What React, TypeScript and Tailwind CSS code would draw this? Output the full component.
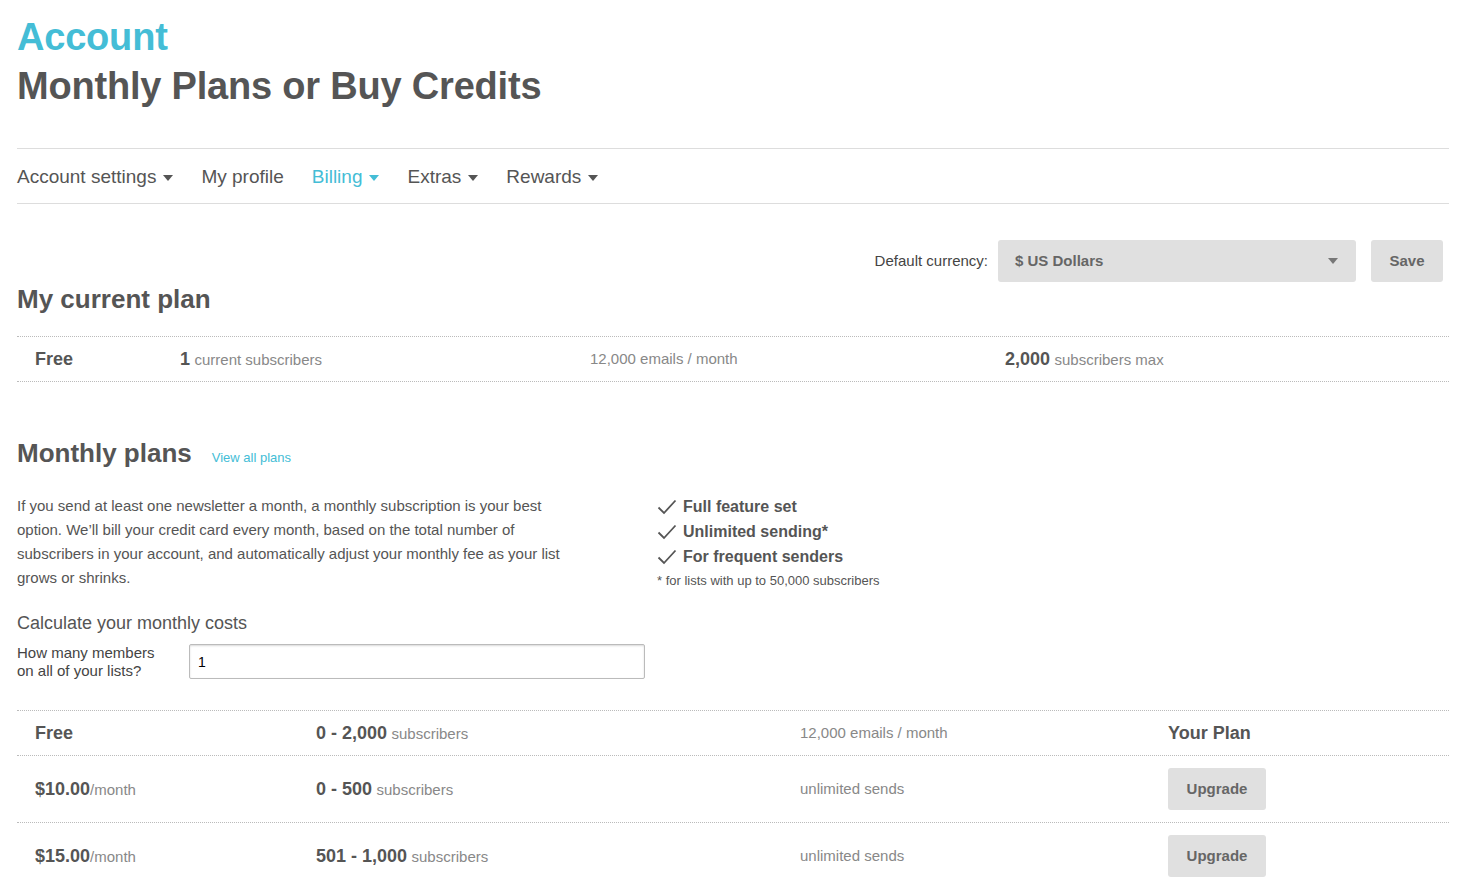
import React from 'react';

const Caret: React.FC<{ className?: string }> = ({ className }) => (
    <svg width="10" height="6" viewBox="0 0 10 6" className={className}>
        <path d="M0 0 L10 0 L5 6 Z" fill="currentColor" />
    </svg>
);

const Check: React.FC = () => (
    <svg width="20" height="16" viewBox="0 0 20 16" className="shrink-0">
        <path d="M1.5 8.5 L7 14 L18.5 1.5" fill="none" stroke="#555" strokeWidth="1.8" />
    </svg>
);

const NAV = [
    { label: 'Account settings', caret: true },
    { label: 'My profile', caret: false },
    { label: 'Billing', caret: true, active: true },
    { label: 'Extras', caret: true },
    { label: 'Rewards', caret: true },
];

const PLANS = [
    { price: '$10.00', range: '0 - 500' },
    { price: '$15.00', range: '501 - 1,000' },
];

const App: React.FC = () => {
    return (
        <div className="min-h-screen bg-white px-[17px] text-[#555]" style={{ fontFamily: '"Liberation Sans", Arial, sans-serif' }}>
            {/* page title */}
            <div className="pt-[13px]">
                <h1 className="text-[38px] font-bold leading-[49px] text-[#44bdd6] tracking-[-0.2px]">Account</h1>
                <h2 className="text-[38px] font-bold leading-[49px] text-[#555] tracking-[-0.2px]">Monthly Plans or Buy Credits</h2>
            </div>

            {/* sub nav */}
            <nav className="mt-[37px] flex h-[56px] items-center gap-[28px] border-y border-[#dddddd] pt-[3px]">
                {NAV.map((item) => (
                    <div key={item.label} className={`flex items-center gap-[7px] text-[19px] ${item.active ? 'text-[#44bdd6]' : 'text-[#555]'}`}>
                        <span>{item.label}</span>
                        {item.caret && <Caret />}
                    </div>
                ))}
            </nav>

            {/* currency */}
            <div className="mt-[36px] flex items-center justify-end pr-[6px]">
                <span className="mr-[10px] text-[15px] text-[#444]">Default currency:</span>
                <div className="flex h-[42px] w-[358px] items-center justify-between rounded-[3px] bg-[#e0e0e0] pl-[17px] pr-[18px]">
                    <span className="text-[15px] font-bold text-[#666]">$ US Dollars</span>
                    <Caret className="text-[#777]" />
                </div>
                <button className="ml-[15px] h-[42px] w-[72px] rounded-[3px] bg-[#e0e0e0] text-[15px] font-bold text-[#666]">Save</button>
            </div>

            {/* current plan */}
            <h3 className="mt-[2px] text-[26px] font-bold leading-[30px] text-[#555]">My current plan</h3>
            <div className="mt-[22px] grid h-[46px] grid-cols-[145px_410px_415px_1fr] items-center border-y border-dotted border-[#bbb]">
                <div className="pl-[18px] text-[18px] font-bold">Free</div>
                <div className="pl-[18px]"><span className="text-[18px] font-bold">1</span> <span className="text-[15px] text-[#888]">current subscribers</span></div>
                <div className="pl-[18px] text-[15px] text-[#888]">12,000 emails / month</div>
                <div className="pl-[18px]"><span className="text-[18px] font-bold">2,000</span> <span className="text-[15px] text-[#888]">subscribers max</span></div>
            </div>

            {/* monthly plans */}
            <div className="mt-[56px] flex items-baseline gap-[20px]">
                <h3 className="text-[26px] font-bold leading-[30px] text-[#555]">Monthly plans</h3>
                <a className="text-[13px] text-[#44bdd6]">View all plans</a>
            </div>

            <div className="mt-[26px] grid grid-cols-[640px_1fr]">
                <div>
                    <p className="max-w-[560px] text-[15px] leading-[24px] text-[#555]">
                        If you send at least one newsletter a month, a monthly subscription is your best option. We’ll bill your credit card every month, based on the total number of subscribers in your account, and automatically adjust your monthly fee as your list grows or shrinks.
                    </p>
                    <h4 className="mt-[21px] text-[18px] leading-[24px] text-[#555]">Calculate your monthly costs</h4>
                    <div className="mt-[9px] flex items-start">
                        <label className="w-[172px] text-[15px] leading-[18px] text-[#444]">How many members<br />on all of your lists?</label>
                        <input
                            defaultValue="1"
                            className="h-[35px] w-[456px] rounded-[2px] border border-[#bbb] px-[8px] text-[14px] text-black shadow-[inset_0_1px_2px_rgba(0,0,0,0.15)] outline-none"
                        />
                    </div>
                </div>
                <div>
                    {['Full feature set', 'Unlimited sending*', 'For frequent senders'].map((f) => (
                        <div key={f} className="flex h-[25px] items-center gap-[6px]">
                            <Check />
                            <span className="text-[16px] font-bold text-[#555]">{f}</span>
                        </div>
                    ))}
                    <p className="mt-[2px] text-[13px] text-[#555]">* for lists with up to 50,000 subscribers</p>
                </div>
            </div>

            {/* plans table */}
            <div className="mt-[30px] border-t border-dotted border-[#bbb]">
                <div className="grid h-[45px] grid-cols-[281px_484px_368px_1fr] items-center border-b border-dotted border-[#bbb]">
                    <div className="pl-[18px] text-[18px] font-bold">Free</div>
                    <div className="pl-[18px]"><span className="text-[18px] font-bold">0 - 2,000</span> <span className="text-[15px] text-[#888]">subscribers</span></div>
                    <div className="pl-[18px] text-[15px] text-[#888]">12,000 emails / month</div>
                    <div className="pl-[18px] text-[18px] font-bold">Your Plan</div>
                </div>
                {PLANS.map((p) => (
                    <div key={p.price} className="grid h-[67px] grid-cols-[281px_484px_368px_1fr] items-center border-b border-dotted border-[#bbb]">
                        <div className="pl-[18px]"><span className="text-[18px] font-bold">{p.price}</span><span className="text-[15px] text-[#888]">/month</span></div>
                        <div className="pl-[18px]"><span className="text-[18px] font-bold">{p.range}</span> <span className="text-[15px] text-[#888]">subscribers</span></div>
                        <div className="pl-[18px] text-[15px] text-[#888]">unlimited sends</div>
                        <div className="pl-[18px]">
                            <button className="h-[42px] w-[98px] rounded-[3px] bg-[#e0e0e0] text-[15px] font-bold text-[#666]">Upgrade</button>
                        </div>
                    </div>
                ))}
            </div>
        </div>
    );
};

export default App;
